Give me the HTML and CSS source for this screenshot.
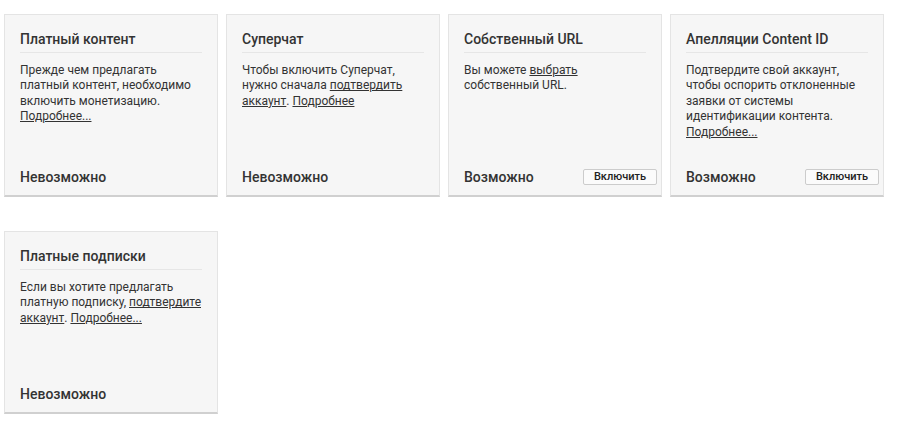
FILE: index.html
```html
<!DOCTYPE html>
<html lang="ru">
<head>
<meta charset="utf-8">
<link rel="stylesheet" href="styles.css">
</head>
<body>
<div class="grid">
  <div class="card">
    <div class="card-title">Платный контент</div>
    <div class="card-body">Прежде чем предлагать платный контент, необходимо включить монетизацию. <a href="#">Подробнее...</a></div>
    <div class="card-footer"><span class="status">Невозможно</span></div>
  </div>
  <div class="card">
    <div class="card-title">Суперчат</div>
    <div class="card-body">Чтобы включить Суперчат, нужно сначала <a href="#">подтвердить аккаунт</a>. <a href="#">Подробнее</a></div>
    <div class="card-footer"><span class="status">Невозможно</span></div>
  </div>
  <div class="card">
    <div class="card-title">Собственный URL</div>
    <div class="card-body">Вы можете <a href="#">выбрать</a> собственный URL.</div>
    <div class="card-footer"><span class="status">Возможно</span><button class="btn">Включить</button></div>
  </div>
  <div class="card">
    <div class="card-title">Апелляции Content ID</div>
    <div class="card-body">Подтвердите свой аккаунт, чтобы оспорить отклоненные заявки от системы идентификации контента. <a href="#">Подробнее...</a></div>
    <div class="card-footer"><span class="status">Возможно</span><button class="btn">Включить</button></div>
  </div>
  <div class="card">
    <div class="card-title">Платные подписки</div>
    <div class="card-body">Если вы хотите предлагать платную подписку, <a href="#">подтвердите аккаунт</a>. <a href="#">Подробнее...</a></div>
    <div class="card-footer"><span class="status">Невозможно</span></div>
  </div>
</div>
</body>
</html>
```
FILE: styles.css
```css
html, body {
  margin: 0;
  padding: 0;
  background: #ffffff;
  font-family: Roboto, "Liberation Sans", Arial, sans-serif;
  color: #333333;
}

.grid {
  display: grid;
  grid-template-columns: repeat(4, 214px);
  column-gap: 8px;
  row-gap: 34px;
  padding: 14px 0 0 4px;
}

.card {
  box-sizing: border-box;
  height: 183px;
  background: #f6f6f6;
  border: 1px solid #e4e4e4;
  border-bottom: 2px solid #d0d0d0;
  display: flex;
  flex-direction: column;
}

.card-title {
  margin: 15px 15px 0;
  padding-bottom: 4px;
  border-bottom: 1px solid #e6e6e6;
  font-size: 14px;
  line-height: 18px;
  font-weight: 500;
  color: #333333;
}

.card-body {
  margin: 10px 15px 0;
  font-size: 12px;
  line-height: 15.4px;
  color: #333333;
}

.card-body a {
  color: #333333;
  text-decoration: underline;
}

.card-footer {
  margin-top: auto;
  padding: 0 4px 9px 15px;
  display: flex;
  align-items: center;
  justify-content: space-between;
  height: 18px;
}

.status {
  font-size: 14px;
  line-height: 18px;
  font-weight: 500;
  color: #333333;
}

.btn {
  box-sizing: border-box;
  width: 74px;
  height: 16px;
  padding: 0;
  background: #fbfbfb;
  border: 1px solid #cccccc;
  border-radius: 2px;
  font-family: Roboto, "Liberation Sans", Arial, sans-serif;
  font-size: 11px;
  line-height: 14px;
  font-weight: 500;
  color: #222222;
}
```
